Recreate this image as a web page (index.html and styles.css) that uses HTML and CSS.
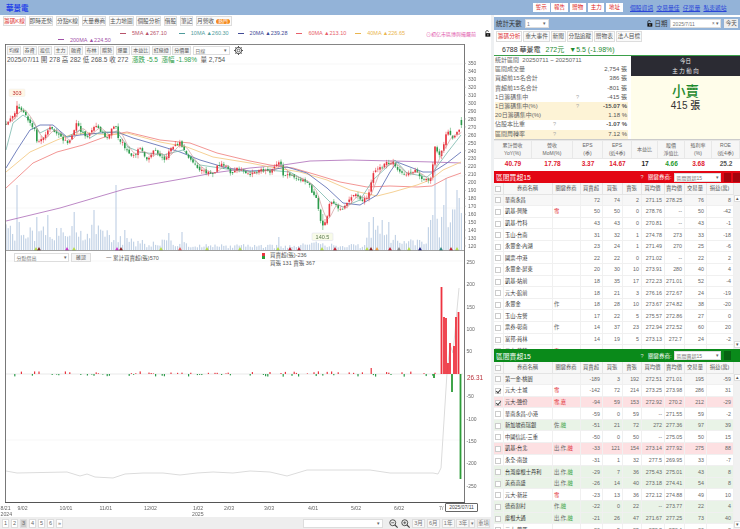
FILE: index.html
```html
<!DOCTYPE html>
<html lang="zh-Hant">
<head>
<meta charset="utf-8">
<title>華景電</title>
<link rel="stylesheet" href="styles.css">
</head>
<body>
<header class="top">
  <div class="title">華景電</div>
  <div class="top-btns"><button>警示</button><button>報告</button><button>贈物</button><button>主力</button><button>地址</button></div>
  <nav class="top-links"><a>個股資訊</a><a>交易量佳</a><a>仔單量</a><a>私衷遞站</a></nav>
</header>
<div class="main">
  <section class="left">
    <div class="tabs ltabs">
      <span class="tab on">籌碼K線</span><span class="tab">即時走勢</span><span class="tab">分點K線</span><span class="tab">大量券商</span><span class="tab">主力地圖</span><span class="tab">個股分析</span><span class="tab">借股</span><span class="tab">筆記</span><span class="tab last">月營收 <i class="pill">熱門</i></span>
    </div>
    <div class="legend">
      <div class="leg-row r1">
        <span class="ma c5"><b></b>5MA ▲267.10</span>
        <span class="ma c10"><b></b>10MA ▲260.30</span>
        <span class="ma c20"><b></b>20MA ▲239.28</span>
        <span class="ma c60"><b></b>60MA ▲213.10</span>
        <span class="ma c40"><b></b>40MA ▲226.65</span>
        <span class="note">⊙初亿市區博與撮嚴前</span>
        <svg class="lock" viewBox="0 0 10 10"><path d="M2.5 4.5V3a2 2 0 0 1 4-.4" fill="none" stroke="#222" stroke-width="1"/><rect x="2" y="4.5" width="7" height="5" fill="#111"/><rect x="5" y="6" width="1.2" height="2" fill="#fff"/></svg>
      </div>
      <div class="leg-row r2"><span class="ma c200"><b></b>200MA ▲224.50</span></div>
    </div>
    <div class="chart">
      <svg id="plot" class="plot" viewBox="0 44 491 473" preserveAspectRatio="none"></svg>
      <div class="toolbar">
        <span class="tb">均線</span><span class="tb">券資</span><span class="tb">投信</span><span class="tb">主力</span><span class="tb">融資</span><span class="tb">布林</span><span class="tb">贈勢</span><span class="tb">爆量</span><span class="tb">本益比</span><span class="tb">紅綠燈</span><span class="tb">分價量</span>
        <span class="sel sel-day">日線<i>▾</i></span>
        <svg class="gear" viewBox="0 0 12 12"><circle cx="6" cy="6" r="4.2" fill="none" stroke="#444" stroke-width="1.3"/><circle cx="6" cy="6" r="1.8" fill="none" stroke="#444" stroke-width="1"/><path d="M6 0v2M6 10v2M0 6h2M10 6h2M1.8 1.8l1.4 1.4M8.8 8.8l1.4 1.4M1.8 10.2l1.4-1.4M8.8 3.2l1.4-1.4" stroke="#444" stroke-width="1.2"/></svg>
      </div>
      <div class="ohlc">2025/07/11 開 278 高 282 低 268.5 收 272 <span class="dn">&nbsp;漲跌 -5.5 &nbsp;漲幅 -1.98%</span> &nbsp;量 2,754</div>
      <div class="subbar">
        <span class="sel sel-sub">分點借出<i>▾</i></span><span class="tb confirm">確認</span>
        <span class="cum">一 累計買賣超(張)570</span>
      </div>
      <div class="stack-info">
        <i class="stack-ico"></i>
        <div><div>買賣超(張)-236</div><div>買張 131 賣張 367</div></div>
      </div>
      <div class="date-tip">2025/07/11</div>
    </div>
    <footer class="bottom">
      <div class="pager"><span>1</span><span>2</span><span class="cur">3</span><span>4</span><span>5</span><span>6</span><span>»</span></div>
      <div class="range">
        <span class="sel sel-range"><i>▾</i></span>
        <svg class="zoomi" viewBox="0 0 12 12"><circle cx="5" cy="5" r="4" fill="none" stroke="#444" stroke-width="1.2"/><path d="M8 8l3.5 3.5" stroke="#444" stroke-width="1.5"/><path d="M3 5h4" stroke="#444"/></svg>
        <svg class="zoomi" viewBox="0 0 12 12"><circle cx="5" cy="5" r="4" fill="none" stroke="#444" stroke-width="1.2"/><path d="M8 8l3.5 3.5" stroke="#444" stroke-width="1.5"/><path d="M3 5h4M5 3v4" stroke="#444"/></svg>
        <span class="rb">3月</span><span class="rb">6月</span><span class="rb">1年</span><span class="rb">3年</span><span class="rb arrow">▾</span><span class="rb">重填</span>
      </div>
    </footer>
  </section>

  <aside class="right">
    <div class="opts">
      <span class="lbl">統計天數</span><span class="sel sel-days">1<i>▾</i></span>
      <svg class="lock lock2" viewBox="0 0 10 10"><path d="M2.5 4.5V3a2 2 0 0 1 4-.4" fill="none" stroke="#222" stroke-width="1"/><rect x="2" y="4.5" width="7" height="5" fill="#111"/><rect x="5" y="6" width="1.2" height="2" fill="#fff"/></svg>
      <span class="lbl">日期</span><span class="sel sel-date">2025/7/11<i>× ▾</i></span><span class="today">今天</span>
    </div>
    <div class="tabs rtabs">
      <span class="tab on">籌碼分析</span><span class="tab">重大事件</span><span class="tab">新聞</span><span class="tab">分點追蹤</span><span class="tab">贈物表</span><span class="tab">法人目標</span>
    </div>
    <div class="quote"><span class="code">6788 華景電</span><span class="px">272元</span><span class="px">▼5.5 (-1.98%)</span></div>
    <div class="summary">
      <div class="stats">
        <div class="st"><span>統計區間 &nbsp;20250711 ~ 20250711</span></div>
        <div class="st"><span>區間成交量</span><em>2,754 張</em></div>
        <div class="st"><span>買超前15名合計</span><em>386 張</em></div>
        <div class="st"><span>賣超前15名合計</span><em>-801 張</em></div>
        <div class="st"><span>1日籌碼集中</span><u>?</u><em>-415 張</em></div>
        <div class="st y"><span>1日籌碼集中(%)</span><u>?</u><em class="strong">-15.07 %</em></div>
        <div class="st y"><span>20日籌碼集中(%)</span><em>1.18 %</em></div>
        <div class="st"><span>佔股本比重</span><u class="near">?</u><em class="strong">-1.07 %</em></div>
        <div class="st y"><span>區間周轉率</span><u class="near">?</u><em>7.12 %</em></div>
      </div>
      <div class="today-box">
        <div class="tb-head"><div>今日</div><div>主 力 動 向</div></div>
        <div class="tb-body"><div class="big">小賣</div><div class="lots">415 張</div></div>
      </div>
    </div>
    <div class="fin">
      <div class="fc"><span>累計營收<br>YoY(%)</span><b class="r">40.79</b></div>
      <div class="fc"><span>營收<br>MoM(%)</span><b class="r">17.78</b></div>
      <div class="fc"><span>EPS<br>(季)</span><b class="r">3.37</b></div>
      <div class="fc"><span>EPS<br>(近4季)</span><b class="r">14.67</b></div>
      <div class="fc"><span>本益比</span><b class="k">17</b></div>
      <div class="fc"><span>股價<br>淨值比</span><b class="g">4.66</b></div>
      <div class="fc"><span>殖利率<br>(%)</span><b class="r">3.68</b></div>
      <div class="fc"><span>ROE<br>(近4季)</span><b class="k2">25.2</b></div>
    </div>

    <div class="band red"><span>區間買超15</span><div class="band-r"><u>?</u><span>關鍵券商:</span><span class="sel sel-band">區間買超15<i>▾</i></span><s></s><s></s></div></div>
    <div class="grid-wrap h1">
      <table class="grid">
        <colgroup><col class="w0"><col class="w1"><col class="w2"><col class="w3"><col class="w4"><col class="w5"><col class="w6"><col class="w7"><col class="w8"><col class="w9"></colgroup>
        <thead><tr><th><i class="cb"></i></th><th>券商名稱</th><th>關鍵券商</th><th>買賣超</th><th>買張</th><th>賣張</th><th>買均價</th><th>賣均價</th><th>交易量</th><th>損益(萬)</th></tr></thead>
        <tbody>
          <tr class="gray"><td><i class="cb"></i></td><td>華南永昌</td><td></td><td>72</td><td>74</td><td>2</td><td>271.15</td><td>278.25</td><td>76</td><td>8</td></tr>
          <tr><td><i class="cb"></i></td><td>凱基-興隆</td><td><em class="kr">雪</em></td><td>50</td><td>50</td><td>0</td><td>278.76</td><td>--</td><td>50</td><td>-42</td></tr>
          <tr><td><i class="cb"></i></td><td>凱基-竹科</td><td></td><td>43</td><td>43</td><td>0</td><td>270.81</td><td>--</td><td>43</td><td>-1</td></tr>
          <tr><td><i class="cb"></i></td><td>玉山-台南</td><td></td><td>31</td><td>32</td><td>1</td><td>274.78</td><td>273</td><td>33</td><td>-18</td></tr>
          <tr><td><i class="cb"></i></td><td>永豐金-內湖</td><td></td><td>23</td><td>24</td><td>1</td><td>271.49</td><td>270</td><td>25</td><td>-6</td></tr>
          <tr><td><i class="cb"></i></td><td>國票-中港</td><td></td><td>22</td><td>22</td><td>0</td><td>271.02</td><td>--</td><td>22</td><td>2</td></tr>
          <tr><td><i class="cb"></i></td><td>永豐金-屏東</td><td></td><td>20</td><td>30</td><td>10</td><td>273.91</td><td>280</td><td>40</td><td>4</td></tr>
          <tr><td><i class="cb"></i></td><td>凱基-站前</td><td></td><td>18</td><td>35</td><td>17</td><td>272.23</td><td>271.01</td><td>52</td><td>-4</td></tr>
          <tr><td><i class="cb"></i></td><td>元大-館前</td><td></td><td>18</td><td>21</td><td>3</td><td>276.16</td><td>272.67</td><td>24</td><td>-19</td></tr>
          <tr><td><i class="cb"></i></td><td>永豐金</td><td><em>作</em></td><td>18</td><td>28</td><td>10</td><td>273.67</td><td>274.82</td><td>38</td><td>-20</td></tr>
          <tr><td><i class="cb"></i></td><td>玉山-左營</td><td></td><td>17</td><td>22</td><td>5</td><td>275.57</td><td>272.86</td><td>27</td><td>0</td></tr>
          <tr><td><i class="cb"></i></td><td>票券-彰南</td><td><em>作</em></td><td>14</td><td>37</td><td>23</td><td>272.94</td><td>272.52</td><td>60</td><td>20</td></tr>
          <tr><td><i class="cb"></i></td><td>富邦-員林</td><td></td><td>14</td><td>19</td><td>5</td><td>273.13</td><td>272.7</td><td>24</td><td>-2</td></tr>
          <tr><td><i class="cb"></i></td><td>元大-花蓮</td><td><em class="kr">雪</em></td><td>14</td><td>14</td><td>0</td><td>271.5</td><td>--</td><td>14</td><td>-1</td></tr>
        </tbody>
      </table>
      <div class="sb"><span>▴</span><span>▾</span></div>
    </div>

    <div class="band green"><span>區間賣超15</span><div class="band-r"><u>?</u><span>關鍵券商:</span><span class="sel sel-band">區間賣超15<i>▾</i></span><s></s><s class="off"></s></div></div>
    <div class="grid-wrap h2">
      <table class="grid">
        <colgroup><col class="w0"><col class="w1"><col class="w2"><col class="w3"><col class="w4"><col class="w5"><col class="w6"><col class="w7"><col class="w8"><col class="w9"></colgroup>
        <thead><tr><th><i class="cb"></i></th><th>券商名稱</th><th>關鍵券商</th><th>買賣超</th><th>買張</th><th>賣張</th><th>買均價</th><th>賣均價</th><th>交易量</th><th>損益(萬)</th></tr></thead>
        <tbody>
          <tr class="gray"><td><i class="cb"></i></td><td>第一金-桃園</td><td></td><td>-189</td><td>3</td><td>192</td><td>272.51</td><td>271.01</td><td>195</td><td>-59</td></tr>
          <tr><td><i class="cb ck"></i></td><td>元大-土城</td><td><em class="kr">雪</em></td><td>-142</td><td>72</td><td>214</td><td>273.25</td><td>273.98</td><td>286</td><td>31</td></tr>
          <tr class="pink"><td><i class="cb ck"></i></td><td>元大-鹽份</td><td><em class="kr">雪,嘉</em></td><td>-94</td><td>59</td><td>153</td><td>272.92</td><td>270.2</td><td>212</td><td>-29</td></tr>
          <tr><td><i class="cb"></i></td><td>華南永昌-小港</td><td></td><td>-59</td><td>0</td><td>59</td><td>--</td><td>271.55</td><td>59</td><td>-2</td></tr>
          <tr class="mint"><td><i class="cb"></i></td><td>新加坡商瑞銀</td><td><em>佐,<em class="kg">融</em></em></td><td>-51</td><td>21</td><td>72</td><td>272</td><td>277.36</td><td>97</td><td>39</td></tr>
          <tr><td><i class="cb"></i></td><td>中國信託-三重</td><td></td><td>-50</td><td>0</td><td>50</td><td>--</td><td>275.05</td><td>50</td><td>15</td></tr>
          <tr class="pink"><td><i class="cb"></i></td><td>凱基-台北</td><td><em>出,作,<em class="kr">融</em></em></td><td>-33</td><td>121</td><td>154</td><td>273.14</td><td>277.92</td><td>275</td><td>88</td></tr>
          <tr><td><i class="cb"></i></td><td>永全-南鼓</td><td></td><td>-31</td><td>1</td><td>32</td><td>277.5</td><td>269.95</td><td>33</td><td>-7</td></tr>
          <tr class="mint"><td><i class="cb"></i></td><td>台灣摩根士丹利</td><td><em>出,作,<em class="kg">融</em></em></td><td>-29</td><td>7</td><td>36</td><td>275.43</td><td>275.01</td><td>43</td><td>8</td></tr>
          <tr class="mint"><td><i class="cb"></i></td><td>美商高盛</td><td><em>出,作,<em class="kg">融</em></em></td><td>-26</td><td>14</td><td>40</td><td>273.18</td><td>274.41</td><td>54</td><td>8</td></tr>
          <tr><td><i class="cb"></i></td><td>元大-新莊</td><td><em class="kr">雪</em></td><td>-23</td><td>13</td><td>36</td><td>272.12</td><td>274.88</td><td>49</td><td>10</td></tr>
          <tr class="mint"><td><i class="cb"></i></td><td>德商割村</td><td><em>作,<em class="kg">融</em></em></td><td>-22</td><td>0</td><td>22</td><td>--</td><td>273.77</td><td>22</td><td>4</td></tr>
          <tr class="mint"><td><i class="cb"></i></td><td>摩根大通</td><td><em>出,作,<em class="kg">融</em></em></td><td>-21</td><td>26</td><td>47</td><td>271.67</td><td>277.25</td><td>73</td><td>40</td></tr>
          <tr><td><i class="cb"></i></td><td>元大-豐原</td><td></td><td>-20</td><td>5</td><td>25</td><td>272.8</td><td>273.4</td><td>30</td><td>2</td></tr>
        </tbody>
      </table>
      <div class="sb"><span>▴</span><span>▾</span></div>
    </div>
  </aside>
</div>
<script src="chart.js"></script>
</body>
</html>
```
FILE: styles.css
```css
* { box-sizing: border-box; }
html, body { margin: 0; padding: 0; }
body {
  width: 740px; height: 529px; overflow: hidden; background: #fff;
  font-family: "Liberation Sans", "Noto Sans CJK TC", sans-serif;
  font-size: 6px; color: #555;
}
i, em, u { font-style: normal; text-decoration: none; }

.top { height: 15px; background: #93b3d8; display: flex; align-items: center; padding-left: 6px; }
.title { color: #1f40e8; font-size: 7.5px; font-weight: 700; width: 527px; }
.top-btns { display: flex; gap: 1.7px; width: 97px; }
.top-btns button { font: 5.5px "Liberation Sans", "Noto Sans CJK TC", sans-serif; color: #d22; background: #fff; border: 0; padding: 0; width: 16.6px; height: 9px; line-height: 9px; }
.top-links { display: flex; gap: 3.2px; font-size: 5.8px; color: #2a45d8; }
.top-links a { text-decoration: underline; }

.main { display: flex; height: 514px; }
.left { width: 491px; display: flex; flex-direction: column; }
.right { width: 249px; border-left: 3px solid #eef0f2; display: flex; flex-direction: column; background: #fff; }

.tabs { display: flex; align-items: center; font-size: 5.7px; }
.tab { border: 1px solid #ddd; background: #fafafa; height: 10px; line-height: 8px; text-align: center; white-space: nowrap; color: #555; }
.tab.on { color: #d33; background: #fff; }
.ltabs { height: 12px; padding-left: 3px; gap: 2.7px; }
.ltabs .last { padding-right: 1px; }
.pill { background: #f58a1f; color: #fff; border-radius: 4px; padding: 0 2.5px; font-size: 4.8px; }

.legend { height: 17px; font-size: 5.5px; }
.leg-row { display: flex; align-items: center; height: 6.5px; }
.r1 { padding-left: 120px; margin-top: 3px; }
.r2 { padding-left: 58px; }
.ma { display: inline-flex; align-items: center; white-space: nowrap; }
.ma b { width: 6px; height: 1px; margin-right: 6px; background: currentColor; }
.r1 .ma { width: 59px; }
.c5 { color: #b8536a; } .c10 { color: #4f9c9c; } .c20 { color: #414a96; } .c60 { color: #e8606a; } .c40 { color: #eab54e; } .c200 { color: #a252a8; }
.note { color: #e050a8; margin-left: 12px; font-size: 5px; white-space: nowrap; }
.lock { width: 7px; height: 7px; margin-left: 8px; flex: none; }
.lock2 { margin-left: 97px; margin-right: 2px; }

.chart { position: relative; flex: 0 0 473px; }
.plot { position: absolute; left: 0; top: 0; width: 491px; height: 473px; filter: blur(.25px); }
.toolbar { position: relative; display: flex; align-items: center; height: 9px; margin-top: 2px; padding-left: 7px; gap: 1.5px; }
.tb { border: 1px solid #ddd; background: #f6f6f6; height: 9px; line-height: 7px; padding: 0 1px; font-size: 5px; white-space: nowrap; color: #555; text-align: center; }
.sel { display: inline-flex; justify-content: space-between; align-items: center; background: #fff; border: 1px solid #ddd; height: 9px; padding: 0 1.5px; font-size: 5px; color: #777; white-space: nowrap; }
.sel i { font-size: 4.5px; color: #666; }
.sel-day { width: 37px; }
.gear { width: 9px; height: 9px; margin-left: 3px; }
.ohlc { position: relative; height: 9px; line-height: 9px; padding-left: 7px; font-size: 6.5px; color: #555; }
.dn { color: #2e9e4a; }
.subbar { position: absolute; left: 14px; top: 209px; display: flex; align-items: center; gap: 2px; }
.sel-sub { width: 55px; }
.confirm { width: 20px; }
.cum { margin-left: 13px; color: #555; font-size: 5.5px; }
.stack-info { position: absolute; left: 262px; top: 208px; display: flex; gap: 5px; font-size: 5.5px; line-height: 7.6px; color: #555; }
.stack-ico { width: 3px; height: 6px; margin-top: 1px; background: linear-gradient(#e8343f 50%, #2c9c38 50%); }
.date-tip { position: absolute; left: 445px; top: 459px; width: 33px; height: 9px; line-height: 7px; border: 1px solid #666; background: #fff; font-size: 5px; text-align: center; color: #444; border-radius: 1px; }

.bottom { flex: 1; background: #eee; display: flex; justify-content: space-between; align-items: center; padding: 0 1px 0 2px; font-size: 5.5px; }
.pager { display: flex; gap: 2px; }
.pager span { width: 7px; height: 9px; line-height: 7px; text-align: center; border: 1px solid #ddd; background: #fff; color: #666; }
.pager .cur { background: #ccc; }
.range { display: flex; align-items: center; gap: 1.8px; }
.sel-range { width: 80px; justify-content: flex-end; height: 9px; margin-right: 4px; }
.zoomi { width: 9px; height: 9px; margin: 0 .5px; }
.rb { border: 1px solid #ddd; background: #f8f8f8; height: 9px; line-height: 7px; padding: 0; width: 13px; text-align: center; color: #777; }
.rb.arrow { font-size: 5px; margin-left: -2px; width: 6px; }

.opts { height: 13px; margin-top: 2px; background: #93b3d8; display: flex; align-items: center; padding-left: 2px; font-size: 6.4px; color: #333; white-space: nowrap; }
.lbl { white-space: nowrap; }
.sel-days { width: 24px; margin-left: 3px; height: 9px; }
.sel-date { width: 51px; margin-left: 3px; height: 9px; }
.today { width: 14px; height: 9px; background: #eee; margin-left: 3px; line-height: 9px; font-size: 5.5px; text-align: center; color: #555; }
.rtabs { height: 13px; gap: 1px; padding-left: 2px; }
.rtabs .tab { height: 11px; line-height: 9px; padding: 0 .8px; }
.quote { height: 13px; display: flex; align-items: center; gap: 5px; padding-left: 8px; font-size: 7px; border-bottom: 1px solid #3ba04a; }
.code { color: #333; white-space: nowrap; }
.px { color: #1c8a30; }

.summary { display: flex; height: 83px; gap: 3px; }
.stats { width: 134px; font-size: 6px; color: #666; padding-left: 1px; }
.st { height: 9.2px; line-height: 9.2px; display: flex; position: relative; }
.st span { white-space: nowrap; }
.st em { margin-left: auto; padding-right: 1px; color: #555; }
.st u { position: absolute; left: 81px; color: #aaa; font-size: 5.5px; }
.st u.near { left: 58px; }
.st .strong { font-weight: 700; color: #555; }
.y { background: #fdf3d6; }
.today-box { width: 109px; display: flex; flex-direction: column; }
.tb-head { height: 20px; background: #2b2b33; color: #eee; font-size: 5.5px; text-align: center; line-height: 9.5px; padding-top: 1px; }
.tb-body { flex: 1; background: #fffdea; text-align: center; }
.big { color: #1e8a2e; font-size: 13.5px; font-weight: 500; margin-top: 7px; line-height: 18px; }
.lots { color: #333; font-size: 10px; line-height: 12px; margin-top: -1px; font-weight: 500; }

.fin { height: 30px; display: grid; grid-template-columns: 38px 41px 30px 29px 26px 27px 27px 28px; border-top: 1px solid #ccc; margin-bottom: 2px; }
.fc { display: grid; grid-template-rows: 19px 10px; text-align: center; font-size: 5px; }
.fc span { background: #f6f6f6; border: 1px solid #e8e8e8; border-left: 0; display: flex; align-items: center; justify-content: center; line-height: 7.5px; color: #666; }
.fc b { font-size: 6.5px; line-height: 10px; }
.r { color: #e02030; } .g { color: #1f9a30; } .k { color: #222; } .k2 { color: #555; }

.band { display: flex; align-items: center; justify-content: space-between; color: #fff; padding-left: 2px; font-size: 6.8px; height: 12px; }
.band.red { background: #e30613; }
.band.green { background: #0a8a1a; height: 13px; }
.band-r { display: flex; align-items: center; gap: 2.5px; font-size: 5.5px; }
.band-r u { color: #ddd; margin-right: 2px; }
.sel-band { width: 47px; }
.band-r s { width: 7px; height: 9px; background: rgba(0,0,0,.28); }
.band-r s.off { background: transparent; }

.grid-wrap { position: relative; overflow: hidden; display: flex; }
.h1 { height: 166px; }
.h2 { flex: 1; }
.grid { width: 239px; flex: none; border-collapse: collapse; table-layout: fixed; font-size: 5.3px; color: #666; }
.grid th, .grid td { padding: 0 1.5px; height: 11.6px; line-height: 8px; white-space: nowrap; overflow: hidden; border: 1px solid #f0f0f0; border-width: 0 1px 1px 0; font-weight: 400; }
.grid th { height: 11px; background: #f7f7f7; text-align: center; border-color: #e4e4e4; padding: 0; color: #555; }
.grid td { text-align: right; }
.grid td:nth-child(2), .grid td:nth-child(3) { text-align: left; }
.grid td:nth-child(1) { text-align: center; padding: 0; }
.grid td:nth-child(2) { color: #333; font-size: 5.2px; }
.gray td { background: #f7f7f7; }
.pink td { background: #fde0e2; }
.mint td { background: #e9f3e7; }
.cb { display: inline-block; width: 6px; height: 6px; border: 1px solid #ccc; background: #fff; vertical-align: middle; position: relative; }
.cb.ck::after { content: ""; position: absolute; left: 1px; top: -1px; width: 2px; height: 4px; border: solid #444; border-width: 0 1px 1px 0; transform: rotate(40deg); }
.kr { color: #e0202a; }
.kg { color: #1f9a30; }
.w0 { width: 9px; } .w1 { width: 49px; } .w2 { width: 28px; } .w3 { width: 22px; } .w4 { width: 20px; } .w5 { width: 19px; } .w6 { width: 23px; } .w7 { width: 20px; } .w8 { width: 22px; } .w9 { width: 27px; }
.sb { flex: 0 0 7px; display: flex; flex-direction: column; justify-content: space-between; background: #f1f1f1; padding: 12px 0 1px; font-size: 5px; text-align: center; color: #555; line-height: 7px; }
.sb span { background: #fff; border: 1px solid #ddd; height: 7px; line-height: 5px; }
```
FILE: chart.js
```js
(function () {
  var NS = 'http://www.w3.org/2000/svg';
  var svg = document.getElementById('plot');
  function el(tag, attrs, text) {
    var n = document.createElementNS(NS, tag);
    for (var k in attrs) n.setAttribute(k, attrs[k]);
    if (text !== undefined) n.textContent = text;
    svg.appendChild(n);
    return n;
  }
  var seed = 7;
  function rnd() { seed = (seed * 16807) % 2147483647; return (seed & 0xffff) / 65535; }
  function interp(pts, x) {
    if (x <= pts[0][0]) return pts[0][1];
    for (var i = 1; i < pts.length; i++) {
      if (x <= pts[i][0]) {
        var a = pts[i - 1], b = pts[i];
        return a[1] + (b[1] - a[1]) * (x - a[0]) / (b[0] - a[0]);
      }
    }
    return pts[pts.length - 1][1];
  }
  function line(pts, color, w) {
    el('polyline', { points: pts.map(function (p) { return p[0] + ',' + p[1].toFixed(1); }).join(' '), fill: 'none', stroke: color, 'stroke-width': w || 0.8 });
  }

  [64, 80, 112, 144, 176, 208, 261, 440].forEach(function (y) {
    el('line', { x1: 6, x2: 463, y1: y, y2: y, stroke: '#f3f3f3', 'stroke-width': 0.7 });
  });

  var price = [[6,125],[12,118],[17,107],[23,110],[30,123],[35,130],[37,143],[42,140],[50,128],[58,135],[68,143],[77,123],[80,130],[87,137],[95,125],[100,130],[107,138],[115,123],[118,137],[125,147],[132,158],[140,148],[147,160],[155,150],[165,160],[170,150],[180,142],[185,153],[197,168],[213,175],[218,165],[227,165],[230,175],[237,168],[250,175],[260,170],[270,172],[280,160],[283,175],[292,175],[302,180],[310,185],[313,197],[315,190],[322,228],[327,217],[330,202],[338,207],[342,212],[350,197],[358,195],[362,200],[368,197],[373,172],[378,170],[387,163],[393,162],[398,172],[407,175],[417,170],[420,177],[430,182],[433,162],[435,147],[440,157],[445,140],[447,130],[453,140],[457,133],[461,125]];
  var m60 = [[6,188],[33,163],[57,152],[83,145],[110,135],[127,132],[160,140],[190,143],[217,153],[250,161],[270,165],[293,168],[317,175],[340,182],[367,187],[390,186],[417,187],[432,186],[447,178],[461,173]];
  var m40 = [[6,172],[30,152],[57,140],[70,135],[87,133],[110,135],[127,133],[160,142],[187,147],[213,157],[250,163],[270,167],[300,172],[327,180],[350,190],[377,196],[393,192],[417,185],[430,180],[443,170],[461,162]];
  var m20 = [[6,168],[17,150],[30,130],[40,125],[53,125],[67,137],[80,135],[100,133],[117,132],[133,138],[157,145],[180,152],[200,160],[227,168],[250,171],[270,170],[287,167],[307,173],[327,188],[343,203],[360,205],[377,195],[390,172],[397,162],[410,167],[423,172],[433,172],[447,163],[461,152]];
  var m10 = [[6,150],[13,123],[23,115],[33,122],[40,133],[50,128],[67,137],[80,130],[90,138],[100,132],[117,132],[128,147],[140,152],[163,155],[183,150],[200,165],[220,168],[248,172],[267,170],[290,172],[313,185],[330,202],[343,207],[360,200],[373,180],[387,167],[395,160],[407,173],[427,177],[433,172],[447,153],[461,135]];
  var m200 = [[6,221],[60,208],[125,189],[187,178],[213,173],[250,168],[283,165],[310,161],[350,160],[393,161],[433,162],[461,163]];

  var env = [[5,30],[30,30],[60,25],[75,30],[100,25],[125,15],[150,8],[170,12],[190,8],[210,6],[250,6],[290,5],[320,10],[340,6],[365,6],[368,25],[390,25],[400,10],[425,12],[430,30],[461,50]];
  var spikes = { 17: 65, 36: 33, 48: 35, 74: 38, 93: 40, 117: 65, 125: 20, 168: 17, 181: 18, 278: 13, 369: 28, 373: 33, 382: 30, 388: 28, 433: 35, 435: 87, 443: 45, 446: 72, 457: 60, 459: 52, 461: 37 };
  var STEP = 2.2, bars = [];
  for (var x = 6; x <= 461.5; x += STEP) bars.push(x);
  bars.forEach(function (bx) {
    var h = interp(env, bx) * (0.3 + 0.7 * rnd());
    for (var s in spikes) if (Math.abs(s - bx) <= 1.1) h = spikes[s];
    el('rect', { x: bx - 0.6, y: 250 - h, width: 1.2, height: h, fill: '#c3d3e6' });
  });
  var marks = { 36: '#b6dc4a', 39: '#7a2a2a', 67: '#c838c8', 74: '#b6dc4a', 117: '#c838c8', 121: '#8a2020', 161: '#b6dc4a', 180: '#e06060', 207: '#b6dc4a', 240: '#b6dc4a', 278: '#b6dc4a', 290: '#c02030', 299: '#c02030', 322: '#b6dc4a', 335: '#c02030', 367: '#b6dc4a', 371: '#8a2020', 377: '#f0a040', 390: '#c02030', 399: '#888', 409: '#b6dc4a', 420: '#202080', 441: '#308880', 451: '#c02030', 457: '#b6dc4a' };
  for (var mx in marks) {
    mx = +mx;
    el('path', { d: 'M' + (mx - 2) + ' 250.5L' + mx + ' 247L' + (mx + 2) + ' 250.5Z', fill: marks[mx] });
  }

  line(m200, '#b57cc0', 0.9);
  line(m60, '#f08a88', 0.9);
  line(m40, '#f4cc8a', 0.9);
  line(m20, '#6676b8', 0.9);
  line(m10, '#78b8ac', 0.8);

  var closes = [], prev = interp(price, 4);
  bars.forEach(function (bx, i) {
    var c = interp(price, bx) + (rnd() - 0.5) * 3;
    var o = prev + (rnd() - 0.5) * 2.5;
    if (i === bars.length - 1) { o = 120; c = 125; }
    var top = Math.min(o, c), bot = Math.max(o, c);
    var hi = top - rnd() * 3.5, lo = bot + rnd() * 3.5;
    if (i === bars.length - 1) { hi = 117; lo = 128; }
    if (Math.abs(bx - 17) < 1.2) hi = 101;
    if (Math.abs(bx - 327) < 1.2) lo = 225;
    if (Math.abs(bx - 322) < 1.2) { lo = 230; hi = 214; }
    var col = c <= o ? '#e8343f' : '#2c9c4c';
    el('line', { x1: bx, x2: bx, y1: hi, y2: lo, stroke: col, 'stroke-width': 0.5 });
    el('rect', { x: bx - 0.8, y: top, width: 1.6, height: Math.max(bot - top, 0.7), fill: col });
    closes.push(c);
    prev = c;
  });
  var m5 = bars.map(function (bx, i) {
    var s = 0, n = 0;
    for (var j = Math.max(0, i - 4); j <= i; j++) { s += closes[j]; n++; }
    return [bx, s / n];
  });
  line(m5, '#c78a8a', 0.6);

  el('rect', { x: 9, y: 89, width: 16, height: 7.5, rx: 1, fill: '#fff7e6', stroke: '#eee', 'stroke-width': 0.5 });
  el('text', { x: 17, y: 95, 'text-anchor': 'middle', 'font-size': 5.5, fill: '#c03030' }, '303');
  el('rect', { x: 312, y: 233, width: 21, height: 7.5, rx: 1, fill: '#f8fbe8', stroke: '#dde', 'stroke-width': 0.5 });
  el('text', { x: 322.5, y: 239, 'text-anchor': 'middle', 'font-size': 5.5, fill: '#5c7a50' }, '140.5');

  var cum = [[6,471],[17,473],[67,472],[80,476],[87,474],[95,477],[113,478],[125,474],[143,473],[163,473],[180,475],[197,473],[213,472],[233,473],[250,471],[270,472],[287,476],[307,470],[370,470],[390,473],[433,473],[438,474],[441,468],[447,373],[450,345],[453,353],[459,288]];
  line(cum, '#dcdcdc', 1);
  el('line', { x1: 6, x2: 463, y1: 374, y2: 374, stroke: '#dadada', 'stroke-width': 0.6 });
  for (var k = 0; k < bars.length; k++) {
    var bx = bars[k];
    if (bx > 436) break;
    if (rnd() < 0.45) {
      var v = rnd() * 2.2 + 0.5, up = rnd() < 0.55;
      if (Math.abs(bx - 371) < 1.1) { v = 6; up = true; }
      el('rect', { x: bx - 0.6, y: up ? 374 - v : 374, width: 1.2, height: v, fill: up ? '#e8343f' : '#2c9c4c' });
    }
  }
  [[441.5,287],[444,317],[446,318],[448,363],[450,343],[454,346],[456,317],[458.5,312]].forEach(function (b) {
    el('rect', { x: b[0] - 0.9, y: b[1], width: 1.8, height: 374 - b[1], fill: '#ee3340' });
  });
  [[452,392],[460.5,479],[434,378]].forEach(function (b) {
    el('rect', { x: b[0] - 0.9, y: 374, width: 1.8, height: b[1] - 374, fill: '#2c9c38' });
  });

  el('line', { x1: 5.5, x2: 5.5, y1: 44, y2: 503, stroke: '#555', 'stroke-width': 0.8 });
  el('line', { x1: 5, x2: 464, y1: 44.5, y2: 44.5, stroke: '#666', 'stroke-width': 0.8 });
  el('line', { x1: 464.5, x2: 464.5, y1: 44, y2: 503, stroke: '#555', 'stroke-width': 0.8 });
  el('line', { x1: 5, x2: 465, y1: 502.5, y2: 502.5, stroke: '#555', 'stroke-width': 1 });
  el('line', { x1: 5, x2: 465, y1: 250.5, y2: 250.5, stroke: '#777', 'stroke-width': 0.7 });

  var T = { 'font-size': 5, fill: '#666', 'font-family': '"Liberation Sans", sans-serif' };
  function txt(x, y, s, extra) {
    var a = { x: x, y: y };
    for (var k in T) a[k] = T[k];
    for (k in (extra || {})) a[k] = extra[k];
    el('text', a, s);
  }
  for (var p = 350; p >= 120; p -= 10) {
    var y = 246 - (p - 120) * 0.794;
    txt(468, y + 1.8, String(p));
    el('line', { x1: 464, x2: 466, y1: y, y2: y, stroke: '#999', 'stroke-width': 0.5 });
  }
  [250, 200, 150, 100, 50, -50, -100, -150, -200, -250].forEach(function (p) {
    var y = 374 - p * 0.448;
    txt(466.5, y + 1.8, String(p));
  });
  txt(467, 379.5, '26.31', { fill: '#b8303a', 'font-size': 6.4 });
  [['8/21', 0.5], ['9/02', 17.5], ['10/01', 59.5], ['11/01', 99.5], ['12/02', 144], ['1/02', 193], ['2/03', 224], ['3/03', 264], ['4/01', 308], ['5/02', 351], ['6/02', 394], ['7/', 439]].forEach(function (d) {
    txt(d[1], 509.5, d[0], { 'font-size': 5.2 });
  });
  txt(0.5, 515.5, '2024', { 'font-size': 5.2 });
  txt(192, 515.5, '2025', { 'font-size': 5.2 });
})();
```
